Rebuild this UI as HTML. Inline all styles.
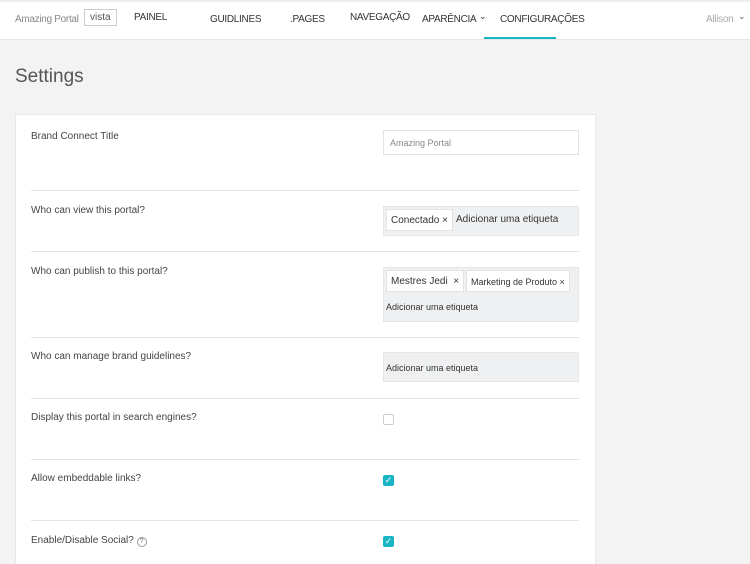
<!DOCTYPE html>
<html style="height:564px;overflow:hidden"><head><style>
body{margin:0;width:750px;height:564px;overflow:hidden;background:#f3f3f3;font-family:"Liberation Sans",sans-serif;position:relative}
.a{position:absolute;white-space:nowrap}
.nav{position:absolute;left:0;top:2px;width:750px;height:37px;background:#fff;border-bottom:1px solid #e6e6e6}
.n{position:absolute;top:12px;font-size:10px;color:#333;letter-spacing:-0.3px;white-space:nowrap}
.card{position:absolute;left:15px;top:114px;width:579px;height:460px;background:#fff;border:1px solid #e8e8e8}
.lbl{position:absolute;left:31px;font-size:10px;color:#444;top:0}
.hr{position:absolute;left:31px;width:548px;height:1px;background:#e4e4e4}
.box{position:absolute;left:383px;width:196px;background:#eff0f2;border:1px solid #e6e6e6;box-sizing:border-box}
.tag{position:absolute;background:#fff;border:1px solid #e3e3e3;font-size:10px;color:#333;height:22px;line-height:22px;padding:0 4px;box-sizing:border-box;white-space:nowrap}
.cb{position:absolute;left:383px;width:11px;height:11px;border-radius:2px;box-sizing:border-box}
</style></head><body>
<div style="position:absolute;top:0;left:0;width:750px;height:2px;background:#eee"></div>
<div class="nav">
<span class="n" style="left:15px;color:#888">Amazing Portal</span>
<span class="a" style="left:84px;top:7px;border:1px solid #ccc;padding:2px 5px;font-size:10px;color:#555">vista</span>
<span class="n" style="left:134px;top:10px">PAINEL</span>
<span class="n" style="left:210px">GUIDLINES</span>
<span class="n" style="left:290px">.PAGES</span>
<span class="n" style="left:350px;top:10px">NAVEGAÇÃO</span>
<span class="n" style="left:422px">APARÊNCIA</span>
<span class="n" style="left:479px;top:9px;font-size:9px">&#8964;</span>
<span class="n" style="left:500px">CONFIGURAÇÕES</span>
<div class="a" style="left:484px;top:35px;width:72px;height:2px;background:#1ab5c4"></div>
<span class="n" style="left:706px;color:#aaa">Allison</span>
<span class="n" style="left:738px;top:9px;font-size:9px;color:#666">&#8964;</span>
</div>
<div class="a" style="left:15px;top:66px;font-size:19px;color:#555">Settings</div>
<div class="card"></div>
<div class="lbl" style="top:131px">Brand Connect Title</div>
<div class="a" style="left:383px;top:130px;width:196px;height:25px;border:1px solid #e3e3e3;box-sizing:border-box;font-size:9px;color:#888;padding:7px 6px">Amazing Portal</div>
<div class="hr" style="top:190px"></div>
<div class="lbl" style="top:205px">Who can view this portal?</div>
<div class="box" style="top:206px;height:30px"></div>
<div class="tag" style="left:386px;top:209px">Conectado ×</div>
<span class="a" style="left:456px;top:214px;font-size:10px;color:#333">Adicionar uma etiqueta</span>
<div class="hr" style="top:251px"></div>
<div class="lbl" style="top:266px">Who can publish to this portal?</div>
<div class="box" style="top:267px;height:55px"></div>
<div class="tag" style="left:386px;top:270px">Mestres Jedi &nbsp;×</div>
<div class="tag" style="left:466px;top:270px;font-size:9px">Marketing de Produto ×</div>
<span class="a" style="left:386px;top:302px;font-size:9px;color:#333">Adicionar uma etiqueta</span>
<div class="hr" style="top:337px"></div>
<div class="lbl" style="top:351px">Who can manage brand guidelines?</div>
<div class="box" style="top:352px;height:30px"></div>
<span class="a" style="left:386px;top:363px;font-size:9px;color:#333">Adicionar uma etiqueta</span>
<div class="hr" style="top:398px"></div>
<div class="lbl" style="top:412px">Display this portal in search engines?</div>
<div class="cb" style="top:414px;border:1px solid #ccc"></div>
<div class="hr" style="top:459px"></div>
<div class="lbl" style="top:473px">Allow embeddable links?</div>
<div class="cb" style="top:475px;background:#1ab5c4;color:#fff;font-size:9px;line-height:11px;text-align:center">✓</div>
<div class="hr" style="top:520px"></div>
<div class="lbl" style="top:535px">Enable/Disable Social? <span style="display:inline-block;width:8px;height:8px;border:1px solid #999;border-radius:50%;font-size:7px;line-height:8px;text-align:center;color:#777">?</span></div>
<div class="cb" style="top:536px;background:#1ab5c4;color:#fff;font-size:9px;line-height:11px;text-align:center">✓</div>
</body></html>
